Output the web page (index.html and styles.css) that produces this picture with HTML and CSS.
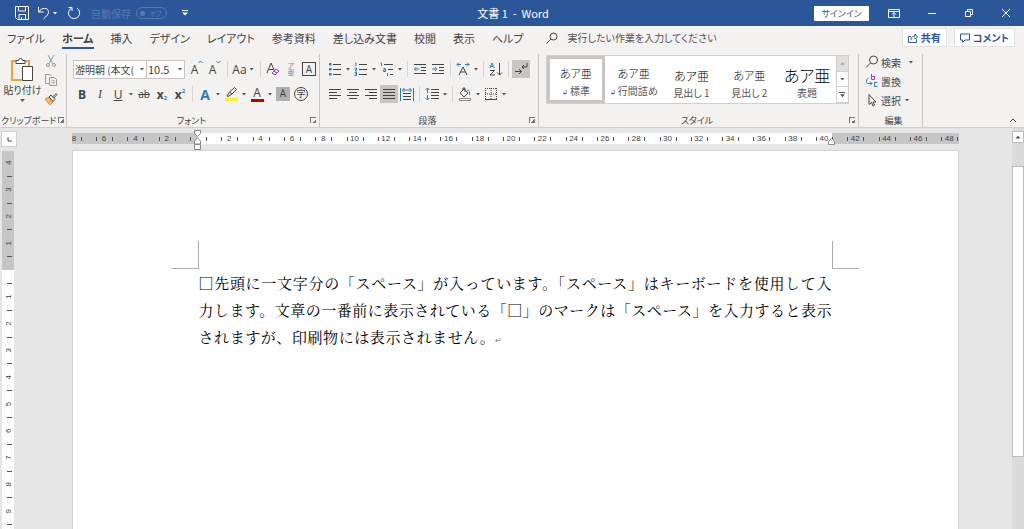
FILE: index.html
```html
<!DOCTYPE html>
<html lang="ja">
<head>
    <meta charset="UTF-8">
    <meta name="viewport" content="width=device-width, initial-scale=1.0">
    <title>文書 1 - Word</title>
    <link rel="stylesheet" href="styles.css">
</head>
<body>
    <header class="titlebar">
        <div class="quick">
            <button aria-label="上書き保存"><svg width="14" height="14" viewBox="0 0 14 14"><path d="M.5.5h13v13h-11l-2-2zM3.500.5v4.500h7v-4.500M4 13.500v-5h6.500v5M6.500 11v2"/></svg></button>
            <button aria-label="元に戻す"><svg width="14" height="14" viewBox="0 0 14 14"><path d="M1.500 1v5h5M1.500 6C5 1 11 1.500 11.500 5.500c.2 3-2 4.500-5 7.500"/></svg><i class="caret"></i></button>
            <button aria-label="繰り返し"><svg width="14" height="14" viewBox="0 0 14 14"><path d="M4.500 2a5.600 5.600 0 1 0 5.500.2M1.500 1.500h3.500v3.500"/></svg></button>
            <label class="autosave">自動保存 <input type="checkbox" disabled><span class="switch"><b></b>オフ</span></label>
            <button class="custom" aria-label="カスタマイズ"><svg width="6" height="6" viewBox="0 0 6 6"><path d="M0 .5h6"/><path class="white" d="M0 2.500h6L3 5.500z"/></svg></button>
        </div>
        <div class="title">文書 1&nbsp; -&nbsp; Word</div>
        <div class="window">
            <button class="signin">サインイン</button>
            <button aria-label="リボンの表示オプション"><svg width="12" height="12" viewBox="0 0 12 12"><path d="M.5 2.500h11v8H.5zM.5 4.500h11M6 10V5.500M4 7.500l2-2 2 2"/></svg></button>
            <button aria-label="最小化"><svg width="10" height="12" viewBox="0 0 10 12"><path d="M1 6.500h8"/></svg></button>
            <button aria-label="元のサイズに戻す"><svg width="10" height="12" viewBox="0 0 10 12"><path d="M1.500 4.500h5v5h-5zM3.500 4.500v-2h5v5h-2"/></svg></button>
            <button aria-label="閉じる"><svg width="10" height="12" viewBox="0 0 10 12"><path d="M1 2l8 8M9 2l-8 8"/></svg></button>
        </div>
    </header>

    <div class="tabbar">
        <nav class="tabs">
            <button>ファイル</button>
            <button class="active">ホーム</button>
            <button>挿入</button>
            <button>デザイン</button>
            <button>レイアウト</button>
            <button>参考資料</button>
            <button>差し込み文書</button>
            <button>校閲</button>
            <button>表示</button>
            <button>ヘルプ</button>
        </nav>
        <label class="tell">
            <svg width="12" height="12" viewBox="0 0 12 12"><circle cx="7.500" cy="4.500" r="3.500"/><path d="M5 7L.5 11.500"/></svg>
            <input type="text" placeholder="実行したい作業を入力してください">
        </label>
        <button class="pill"><svg width="10" height="10" viewBox="0 0 10 10"><path d="M3 3.500H.5v6h8v-3M3 7c0-3 2-4 4-4V1l2.500 3L7 6V4.500"/></svg>共有</button>
        <button class="pill"><svg width="10" height="10" viewBox="0 0 10 10"><path d="M.5 1h9v6H5L2.500 9.500V7h-2z"/></svg>コメント</button>
    </div>

    <div class="ribbon">
        <section class="group clipboard">
            <div class="body">
                <button class="paste">
                    <svg width="24" height="26" viewBox="0 0 24 26"><path class="orange" d="M5 4H1v19h10M14 4h4v5"/><path class="paper" d="M5 6.500v-3h2.500a2 2 0 0 1 4 0H14v3zM11.500 9.500h10v14h-10z"/></svg>
                    <span>貼り付け</span>
                    <i class="caret"></i>
                </button>
                <div class="stack">
                    <button aria-label="切り取り"><svg class="dim" width="14" height="14" viewBox="0 0 14 14"><path d="M4 1l5 9M10 1L5 10"/><circle cx="4" cy="11" r="1.500"/><circle cx="10" cy="11" r="1.500"/></svg></button>
                    <button aria-label="コピー"><svg class="dim" width="14" height="14" viewBox="0 0 14 14"><path d="M5 10.500H1.500v-9H6l1.500 1.500M5.500 4.500h5l2 2v6h-7zM7.500 8h3.500M7.500 10h3.500"/></svg></button>
                    <button aria-label="書式のコピー"><svg width="14" height="14" viewBox="0 0 14 14"><path class="peach" d="M1 7l4-2 4 5-3 3z"/><path d="M5 5l2-2 4 4.500-2 2zM8.500 5L12 1.500l1 1L10 6"/></svg></button>
                </div>
            </div>
            <footer><span>クリップボード</span><button class="launcher" aria-label="クリップボードの詳細"></button></footer>
        </section>

        <section class="group font">
            <div class="body rows">
                <div class="row">
                    <span class="combo name"><select aria-label="フォント"><option>游明朝 (本文(</option></select><i class="caret"></i></span>
                    <span class="combo size"><select aria-label="フォント サイズ"><option>10.5</option></select><i class="caret"></i></span>
                    <button class="tool letter" aria-label="拡大">A<svg width="5" height="10" viewBox="0 0 5 10"><path class="blue" d="M.5 3l2-2 2 2"/></svg></button>
                    <button class="tool letter" aria-label="縮小">A<svg width="5" height="10" viewBox="0 0 5 10"><path class="blue" d="M.5 1l2 2 2-2"/></svg></button>
                    <i class="sep"></i>
                    <button class="tool wide letter">Aa <i class="caret"></i></button>
                    <i class="sep"></i>
                    <button class="tool" aria-label="書式クリア"><svg width="16" height="16" viewBox="0 0 16 16"><path d="M2 12L6 2l3.500 8M3.500 8.500h5"/><path class="purple" d="M7 12l4-4 3 2-4 4zM9 10l3 2"/></svg></button>
                    <button class="tool ruby" aria-label="ルビ"><span>ア</span><span>亜</span></button>
                    <button class="tool" aria-label="囲み線"><span class="boxed">A</span></button>
                </div>
                <div class="row">
                    <button class="tool bold">B</button>
                    <button class="tool italic">I</button>
                    <button class="tool under">U</button><i class="caret"></i>
                    <button class="tool strike">ab</button>
                    <button class="tool bold">x<sub>2</sub></button>
                    <button class="tool bold">x<sup>2</sup></button>
                    <i class="sep"></i>
                    <button class="tool effect">A</button><i class="caret"></i>
                    <button class="tool" aria-label="蛍光ペン"><svg width="14" height="16" viewBox="0 0 14 16"><path d="M3 10l2.500-4L10.500 1.500l2 2L8 8l-4 2.500zM5.500 6L8 8"/><path class="yellow" d="M1 12h13v3H1z"/></svg></button><i class="caret"></i>
                    <button class="tool color"><span>A</span></button><i class="caret"></i>
                    <button class="tool"><span class="shade">A</span></button>
                    <button class="tool"><span class="circled">字</span></button>
                </div>
            </div>
            <footer><span>フォント</span><button class="launcher" aria-label="フォントの詳細"></button></footer>
        </section>

        <section class="group para">
            <div class="body rows">
                <div class="row">
                    <button class="tool" aria-label="箇条書き"><svg width="14" height="14" viewBox="0 0 14 14"><path d="M5 2.500h8M5 7.500h8M5 12.500h8"/><path class="bluefill" d="M1 1h2.500v2.500H1zM1 6h2.500v2.500H1zM1 11h2.500v2.500H1z"/></svg></button><i class="caret"></i>
                    <button class="tool" aria-label="段落番号"><svg width="14" height="14" viewBox="0 0 14 14"><path d="M5 2.500h8M5 7.500h8M5 12.500h8"/><path class="blue" d="M1 1h1v3M.5 6h2v1.500h-1V9H3M.5 10.500h2v3h-2M1 12h1.500"/></svg></button><i class="caret"></i>
                    <button class="tool" aria-label="アウトライン"><svg width="14" height="14" viewBox="0 0 14 14"><path d="M4 2.500h9M8 7.500h5M10 12.500h3"/><path class="blue" d="M.5 1h1v3M3.500 6.500h2v3h-2v-1.500h2M7.500 11v3"/></svg></button><i class="caret"></i>
                    <i class="sep"></i>
                    <button class="tool" aria-label="インデントを減らす"><svg width="14" height="14" viewBox="0 0 14 14"><path d="M1 2.500h12M8 5.500h5M8 8.500h5M1 11.500h12"/><path class="blue" d="M6.500 7h-5M3.500 5l-2 2 2 2"/></svg></button>
                    <button class="tool" aria-label="インデントを増やす"><svg width="14" height="14" viewBox="0 0 14 14"><path d="M1 2.500h12M8 5.500h5M8 8.500h5M1 11.500h12"/><path class="blue" d="M1 7h5M4 5l2 2-2 2"/></svg></button>
                    <i class="sep"></i>
                    <button class="tool" aria-label="拡張書式"><svg width="14" height="14" viewBox="0 0 14 14"><path d="M3 13l4-8 4 8M4.500 10h5"/><path class="blue" d="M5 2.500H1M3 .5l-2 2 2 2M9 2.500h4M11 .5l2 2-2 2"/></svg></button><i class="caret"></i>
                    <i class="sep"></i>
                    <button class="tool" aria-label="並べ替え"><svg width="14" height="14" viewBox="0 0 14 14"><path class="blue" d="M1 6l2-5 2 5M2 4.500h2.500"/><path d="M1 8.500h4.500L1 13h5M10.500 1v12M8 10.500l2.500 2.500 2.500-2.500"/></svg></button>
                    <i class="sep"></i>
                    <button class="tool on" aria-label="編集記号の表示"><svg width="14" height="14" viewBox="0 0 14 14"><path d="M1 9.500h6M5 7l2.500 2.500L5 12M13 1v4H8M10 3L8 5l2 2"/></svg></button>
                </div>
                <div class="row">
                    <button class="tool" aria-label="左揃え"><svg width="14" height="14" viewBox="0 0 14 14"><path d="M1 2.500h12M1 5.500h8M1 8.500h12M1 11.500h8"/></svg></button>
                    <button class="tool" aria-label="中央揃え"><svg width="14" height="14" viewBox="0 0 14 14"><path d="M1 2.500h12M3 5.500h8M1 8.500h12M3 11.500h8"/></svg></button>
                    <button class="tool" aria-label="右揃え"><svg width="14" height="14" viewBox="0 0 14 14"><path d="M1 2.500h12M5 5.500h8M1 8.500h12M5 11.500h8"/></svg></button>
                    <button class="tool on" aria-label="両端揃え"><svg width="14" height="14" viewBox="0 0 14 14"><path d="M1 2.500h12M1 5.500h12M1 8.500h12M1 11.500h12"/></svg></button>
                    <button class="tool" aria-label="均等割り付け"><svg width="14" height="14" viewBox="0 0 14 14"><path d="M3 6.500h8M3 9.500h8M3 12.500h8"/><path class="blue" d="M.5 1v13M13.500 1v13M2.500 3h9M4.500 1l-2 2 2 2M9.500 1l2 2-2 2"/></svg></button>
                    <i class="sep"></i>
                    <button class="tool" aria-label="行間"><svg width="14" height="14" viewBox="0 0 14 14"><path d="M6 2.500h8M6 5.500h8M6 8.500h8M6 11.500h8"/><path class="blue" d="M2.500 1v5M.5 3l2-2 2 2M2.500 8v5M.5 11l2 2 2-2"/></svg></button><i class="caret"></i>
                    <i class="sep"></i>
                    <button class="tool" aria-label="塗りつぶし"><svg width="14" height="14" viewBox="0 0 14 14"><path d="M2 6l4-4 4 4-4 4zM5 3V1h2v4"/><path class="blue" d="M9 3c2 0 3 2 2.500 5"/><path class="gray" d="M1.500 11.500h11v2h-11z"/></svg></button><i class="caret"></i>
                    <button class="tool" aria-label="罫線"><svg width="14" height="14" viewBox="0 0 14 14"><path class="dots" d="M1.500 1v11M12.500 1v11M1 1.500h12M7 1v11M1 7h12"/><path d="M1 12.500h12"/></svg></button><i class="caret"></i>
                </div>
            </div>
            <footer><span>段落</span><button class="launcher" aria-label="段落の詳細"></button></footer>
        </section>

        <section class="group styles">
            <div class="body">
                <div class="gallery">
                    <button class="style selected"><b>あア亜</b><span><small>↲</small> 標準</span></button>
                    <button class="style"><b>あア亜</b><span><small>↲</small> 行間詰め</span></button>
                    <button class="style head"><b>あア亜</b><span>見出し 1</span></button>
                    <button class="style"><b>あア亜</b><span>見出し 2</span></button>
                    <button class="style big"><b>あア亜</b><span>表題</span></button>
                    <div class="scroller">
                        <button class="off" aria-label="上へ"><i class="caret up"></i></button>
                        <button aria-label="下へ"><i class="caret"></i></button>
                        <button class="more" aria-label="その他"><i class="caret"></i></button>
                    </div>
                </div>
            </div>
            <footer><span>スタイル</span><button class="launcher" aria-label="スタイルの詳細"></button></footer>
        </section>

        <section class="group edit">
            <div class="body stack">
                <button><svg width="14" height="14" viewBox="0 0 14 14"><circle cx="8.500" cy="5" r="4"/><path d="M5.500 8L1 12.500"/></svg>検索 <i class="caret far"></i></button>
                <button><svg width="14" height="14" viewBox="0 0 14 14"><path class="purple" d="M6.500 0v5.500h3v-3h-3"/><path class="blue" d="M12.500 8.500h-3v4h3M3.500 4C1 5 1 9 3 9.500h4M5 7.500l2 2-2 2"/></svg>置換</button>
                <button><svg width="14" height="14" viewBox="0 0 14 14"><path d="M4 1.500v10l2.500-2 1.500 3.500 1.500-1L8 9h3z"/></svg>選択 <i class="caret"></i></button>
            </div>
            <footer><span>編集</span></footer>
        </section>
        <button class="collapse" aria-label="リボンを折りたたむ"><svg width="8" height="6" viewBox="0 0 8 6"><path d="M1 5l3-3 3 3"/></svg></button>
    </div>

    <main class="workspace">
        <div class="left">
            <button class="tabstop" aria-label="タブ"><svg width="5" height="5" viewBox="0 0 5 5"><path d="M1 0v4h4"/></svg></button>
            <svg class="vruler" id="vruler" width="12" height="400"></svg>
        </div>
        <div class="canvas">
            <svg class="hruler" id="hruler" width="887" height="22"></svg>
            <article class="page">
                <div class="crops"><i class="crop"></i><i class="crop right"></i></div>
                <p class="line">□先頭に一文字分の「スペース」が入っています。「スペース」はキーボードを使用して入</p>
                <p class="line">力します。文章の一番前に表示されている「□」のマークは「スペース」を入力すると表示</p>
                <p class="line last">されますが、印刷物には表示されません。<small>↵</small></p>
            </article>
        </div>
        <div class="scrollbar">
            <button aria-label="上へスクロール"><i class="caret up"></i></button>
            <div class="thumb"></div>
        </div>
    </main>
    <script src="script.js"></script>
</body>
</html>
```

FILE: styles.css
```css
* {
    box-sizing: border-box;
}
body {
    margin: 0;
    height: 100vh;
    display: flex;
    flex-direction: column;
    overflow: hidden;
    background-color: #e6e6e6;
    color: #444;
    font: 11px "Noto Sans CJK JP", sans-serif;
    font-feature-settings: "palt";
}
button, input, select {
    font: inherit;
    font-feature-settings: inherit;
    color: inherit;
    border: none;
    background: none;
    padding: 0;
    margin: 0;
}
button {
    display: flex;
    align-items: center;
    justify-content: center;
    white-space: nowrap;
}
svg {
    flex: none;
    fill: none;
    stroke: #444;
}
.blue { stroke: #2e7db8; }
.bluefill { fill: #2e7db8; stroke: none; }
.purple { stroke: #a33fb5; }
.orange { stroke: #e8a33d; stroke-width: 2; }
.paper { fill: #fff; }
.peach { fill: #f9b377; stroke: #e8842c; }
.yellow { fill: #f8f032; stroke: none; }
.gray { stroke: #888; fill: #fff; }
.white { fill: #fff; stroke: none; }
.dots { stroke-dasharray: 1 1; }
.dim { stroke: #999; }
.caret {
    flex: none;
    width: 8px;
    height: 3px;
    background-color: #555;
    clip-path: polygon(20% 0, 80% 0, 50% 100%);
}
.caret.up {
    clip-path: polygon(50% 0, 80% 100%, 20% 100%);
}

/* title bar */
.titlebar {
    flex: none;
    display: flex;
    align-items: center;
    height: 26px;
    background-color: #2b579a;
    color: #fff;
}
.titlebar svg { stroke: #fff; }
.titlebar .caret { background-color: #fff; }
.quick, .window {
    flex: 1;
    display: flex;
    align-items: center;
}
.quick {
    padding-left: 15px;
    gap: 8px;
}
.autosave {
    display: flex;
    align-items: center;
    gap: 5px;
    margin-left: 2px;
    font-size: 10px;
    color: #5679b3;
}
.autosave input {
    display: none;
}
.switch {
    display: flex;
    align-items: center;
    gap: 4px;
    width: 31px;
    height: 12px;
    padding: 0 3px;
    border: 1px solid #5679b3;
    border-radius: 6px;
    font-size: 7px;
    white-space: nowrap;
}
.switch b {
    width: 5px;
    height: 5px;
    border-radius: 50%;
    background-color: #5679b3;
}
.custom { margin-left: 7px; }
.title { font-size: 11px; }
.window {
    justify-content: flex-end;
    gap: 27px;
    padding-right: 13px;
}
.signin {
    width: 55px;
    height: 15px;
    border-radius: 1px;
    background-color: #fff;
    color: #2b579a;
    font-size: 9px;
    margin-right: -8px;
}

/* tabs */
.tabbar {
    flex: none;
    display: flex;
    align-items: center;
    height: 27px;
    padding: 0 9px 4px 7px;
    gap: 7px;
    background-color: #f3f2f1;
}
.tabs {
    display: flex;
    gap: 17px;
}
.tabs button {
    height: 22px;
    border-top: 2px solid transparent;
    border-bottom: 2px solid transparent;
}
.tabs .active {
    font-weight: bold;
    border-bottom-color: #2b579a;
}
.tell {
    flex: 1;
    display: flex;
    align-items: center;
    gap: 9px;
    margin-left: 16px;
}
.tell input {
    flex: 1;
    font-size: 10px;
}
.tell input::placeholder {
    color: #555;
    opacity: 1;
}
.pill {
    gap: 3px;
    height: 19px;
    padding: 0 5px;
    border: 1px solid #e4e2e0;
    background-color: #fff;
    color: #2b579a;
    font-size: 10px;
    font-weight: bold;
}
.pill svg { stroke: #2b579a; }

/* ribbon */
.ribbon {
    flex: none;
    display: flex;
    height: 75px;
    background-color: #f3f2f1;
    border-bottom: 1px solid #d2d0ce;
}
.group {
    flex: none;
    display: flex;
    flex-direction: column;
    margin-top: 1px;
    padding-left: 6px;
    border-right: 1px solid #c8c6c4;
}
.clipboard { width: 67px; padding-left: 1px; }
.font { width: 253px; }
.para { width: 219px; }
.styles { width: 320px; }
.edit { width: 64px; }
.body {
    flex: 1;
    display: flex;
    min-height: 0;
}
.group footer {
    display: flex;
    align-items: center;
    height: 14px;
    font-size: 9px;
    white-space: nowrap;
}
.group footer span {
    flex: 1;
    text-align: center;
}
.clipboard footer span {
    min-width: 0;
    text-align: left;
}
.launcher {
    flex: none;
    width: 6px;
    height: 6px;
    margin-right: 3px;
    border-top: 1px solid #777;
    border-left: 1px solid #777;
    background: linear-gradient(135deg, transparent 60%, #777 60%);
}
.clipboard .launcher { margin-right: 2px; }
.paste {
    flex-direction: column;
    justify-content: flex-start;
    width: 43px;
    padding-top: 3px;
    font-size: 10px;
}
.paste span { line-height: 14px; }
.paste .caret { margin-top: 2px; }
.stack {
    display: flex;
    flex-direction: column;
    gap: 5px;
}
.stack button { height: 14px; }
.rows {
    flex-direction: column;
    gap: 7px;
    padding-top: 6px;
}
.row {
    display: flex;
    align-items: center;
    height: 18px;
}
.tool {
    width: 18px;
    height: 18px;
    font: 12px "Open Sans", "Noto Sans CJK JP", sans-serif;
}
.tool.on { background-color: #c8c6c4; }
.wide {
    width: 26px;
    gap: 1px;
}
.letter svg { align-self: flex-start; }
.sep {
    width: 1px;
    height: 16px;
    margin: 0 3px;
    background-color: #d8d6d4;
}
.combo {
    display: flex;
    align-items: center;
    height: 19px;
    border: 1px solid #c8c6c4;
    background-color: #fff;
}
.combo select {
    flex: 1;
    min-width: 0;
    padding-left: 1px;
    appearance: none;
    font-size: 11px;
}
.combo.name { width: 74px; }
.combo.name select { font-size: 10px; }
.combo.size {
    width: 38px;
    margin-right: 3px;
    border-left: none;
}
.ruby {
    flex-direction: column;
    font-size: 7px;
    line-height: 7px;
    color: #888;
}
.boxed, .shade, .circled {
    width: 14px;
    height: 14px;
    font-size: 10px;
    line-height: 13px;
    text-align: center;
}
.boxed { border: 1px solid #444; line-height: 12px; }
.shade { background-color: #b0b0b0; }
.circled {
    border: 1px solid #444;
    border-radius: 50%;
    font-size: 9px;
    line-height: 12px;
}
.bold { font-weight: bold; }
.italic { font: italic 12px "Liberation Serif", serif; }
.under { text-decoration: underline; }
.strike { font-size: 10px; text-decoration: line-through; }
.tool sub, .tool sup {
    font-size: 6px;
    line-height: 6px;
    color: #2e7db8;
}
.tool sub { align-self: flex-end; margin-bottom: 2px; }
.tool sup { align-self: flex-start; margin-top: 3px; }
.effect {
    color: #2e7db8;
    font-size: 14px;
    font-weight: bold;
}
.color span {
    width: 13px;
    border-bottom: 3px solid #c00000;
    line-height: 12px;
}

/* style gallery */
.gallery {
    display: flex;
    width: 303px;
    height: 49px;
    margin: 1px 0 0 1px;
    border: 1px solid #d2d0ce;
    background-color: #fff;
}
.style {
    flex: 1;
    flex-direction: column;
    justify-content: flex-end;
    color: #555;
    font-size: 10px;
    border: 3px solid transparent;
}
.style.selected { border-color: #c8c6c4; }
.style b {
    display: flex;
    align-items: center;
    height: 20px;
    color: #000;
    font-size: 11px;
    font-weight: 300;
}
.style.head b { font-size: 12px; }
.style.big b { font-size: 16px; }
.style span { line-height: 15px; }
.style small { font-size: 7px; }
.scroller {
    display: flex;
    flex-direction: column;
    width: 12px;
    border-left: 1px solid #d2d0ce;
}
.scroller button {
    flex: 1;
    border-bottom: 1px solid #d2d0ce;
}
.scroller .off { background-color: #e1dfdd; }
.scroller .off .caret { background-color: #aaa; }
.more {
    flex-direction: column;
    gap: 1px;
}
.more::before {
    content: "";
    width: 6px;
    height: 1px;
    background-color: #555;
}

.edit .stack {
    padding-top: 1px;
    align-items: flex-start;
}
.edit .stack button {
    gap: 2px;
    font-size: 10px;
}
.edit .far { margin-left: 4px; }
.collapse {
    align-self: flex-end;
    margin: 0 7px 4px auto;
}

/* document */
.workspace {
    flex: 1;
    display: flex;
    min-height: 0;
}
.left {
    width: 18px;
    padding: 4px 0 0 2px;
}
.tabstop {
    width: 14px;
    height: 14px;
    background-color: #fff;
    outline: 1px solid #d2d0ce;
    margin-bottom: 5px;
}
.vruler { display: block; }
.canvas {
    flex: 1;
    display: flex;
    flex-direction: column;
    align-items: center;
}
.hruler text, .vruler text {
    font: 8px "Liberation Sans", sans-serif;
    text-anchor: middle;
    fill: #444;
    stroke: none;
}
.page {
    flex: 1;
    width: 887px;
    padding: 90px 126px 0;
    background-color: #fff;
    border: 1px solid #d4d4d4;
    border-bottom: none;
}
.crops {
    display: flex;
    justify-content: space-between;
    margin: 0 -27px;
}
.crop {
    width: 27px;
    height: 28px;
    border-right: 1px solid #aaa;
    border-bottom: 1px solid #aaa;
}
.crop.right {
    border-right: none;
    border-left: 1px solid #aaa;
}
.line {
    margin: 0;
    color: #000;
    font: 15px/27px "Noto Serif CJK JP", "Noto Sans CJK JP", serif;
    font-feature-settings: normal;
    white-space: nowrap;
    text-align-last: justify;
}
.last { width: 48%; }
.line small {
    font-size: 8px;
    color: #777;
}
.scrollbar {
    width: 12px;
    padding-top: 3px;
    background-color: #dadada;
}
.scrollbar button {
    width: 12px;
    height: 12px;
    background-color: #fff;
    border: 1px solid #bbb;
}
.thumb {
    height: 73%;
    margin-top: 23px;
    background-color: #fff;
    border: 1px solid #bbb;
}
```

FILE: script.js
```js
const NS = 'http://www.w3.org/2000/svg';

function add(svg, tag, attrs, text) {
    const el = document.createElementNS(NS, tag);
    for (const key in attrs) el.setAttribute(key, attrs[key]);
    if (text !== undefined) el.textContent = text;
    svg.appendChild(el);
}

// horizontal ruler, in characters
const h = document.getElementById('hruler');
add(h, 'rect', { x: 0, y: 5, width: 887, height: 11, fill: '#c6c6c6', stroke: 'none' });
add(h, 'rect', { x: 126, y: 5, width: 634, height: 11, fill: '#fff', stroke: 'none' });
for (let n = -8; n <= 48; n += 2) {
    const x = 126 + n * 15.65;
    if (n !== 0) add(h, 'text', { x: Math.max(x, 2), y: 13 }, Math.abs(n));
    for (const t of [x - 8, x + 8]) {
        add(h, 'path', { d: `M${Math.round(t) + 0.5} 9v4`, stroke: '#555' });
    }
}
add(h, 'path', { d: 'M122.500 2.500h6v3l-3 3-3-3zM122.500 16v-3l3-3 3 3v3zM122.500 16.500h6v5h-6z', fill: '#fff', stroke: '#888' });
add(h, 'path', { d: 'M756.500 16.500v-3l3-3 3 3v3z', fill: '#fff', stroke: '#888' });

// vertical ruler
const v = document.getElementById('vruler');
add(v, 'rect', { x: 0, y: 0, width: 12, height: 119, fill: '#c6c6c6', stroke: 'none' });
add(v, 'rect', { x: 0, y: 119, width: 12, height: 281, fill: '#fff', stroke: 'none' });
for (let n = -4; n <= 9; n++) {
    const y = 119 + n * 26.8;
    if (n !== 0) add(v, 'text', { transform: `translate(9 ${y}) rotate(-90)` }, Math.abs(n));
    add(v, 'path', { d: `M5 ${Math.round(y + 13) + 0.5}h5`, stroke: '#555' });
}
```
